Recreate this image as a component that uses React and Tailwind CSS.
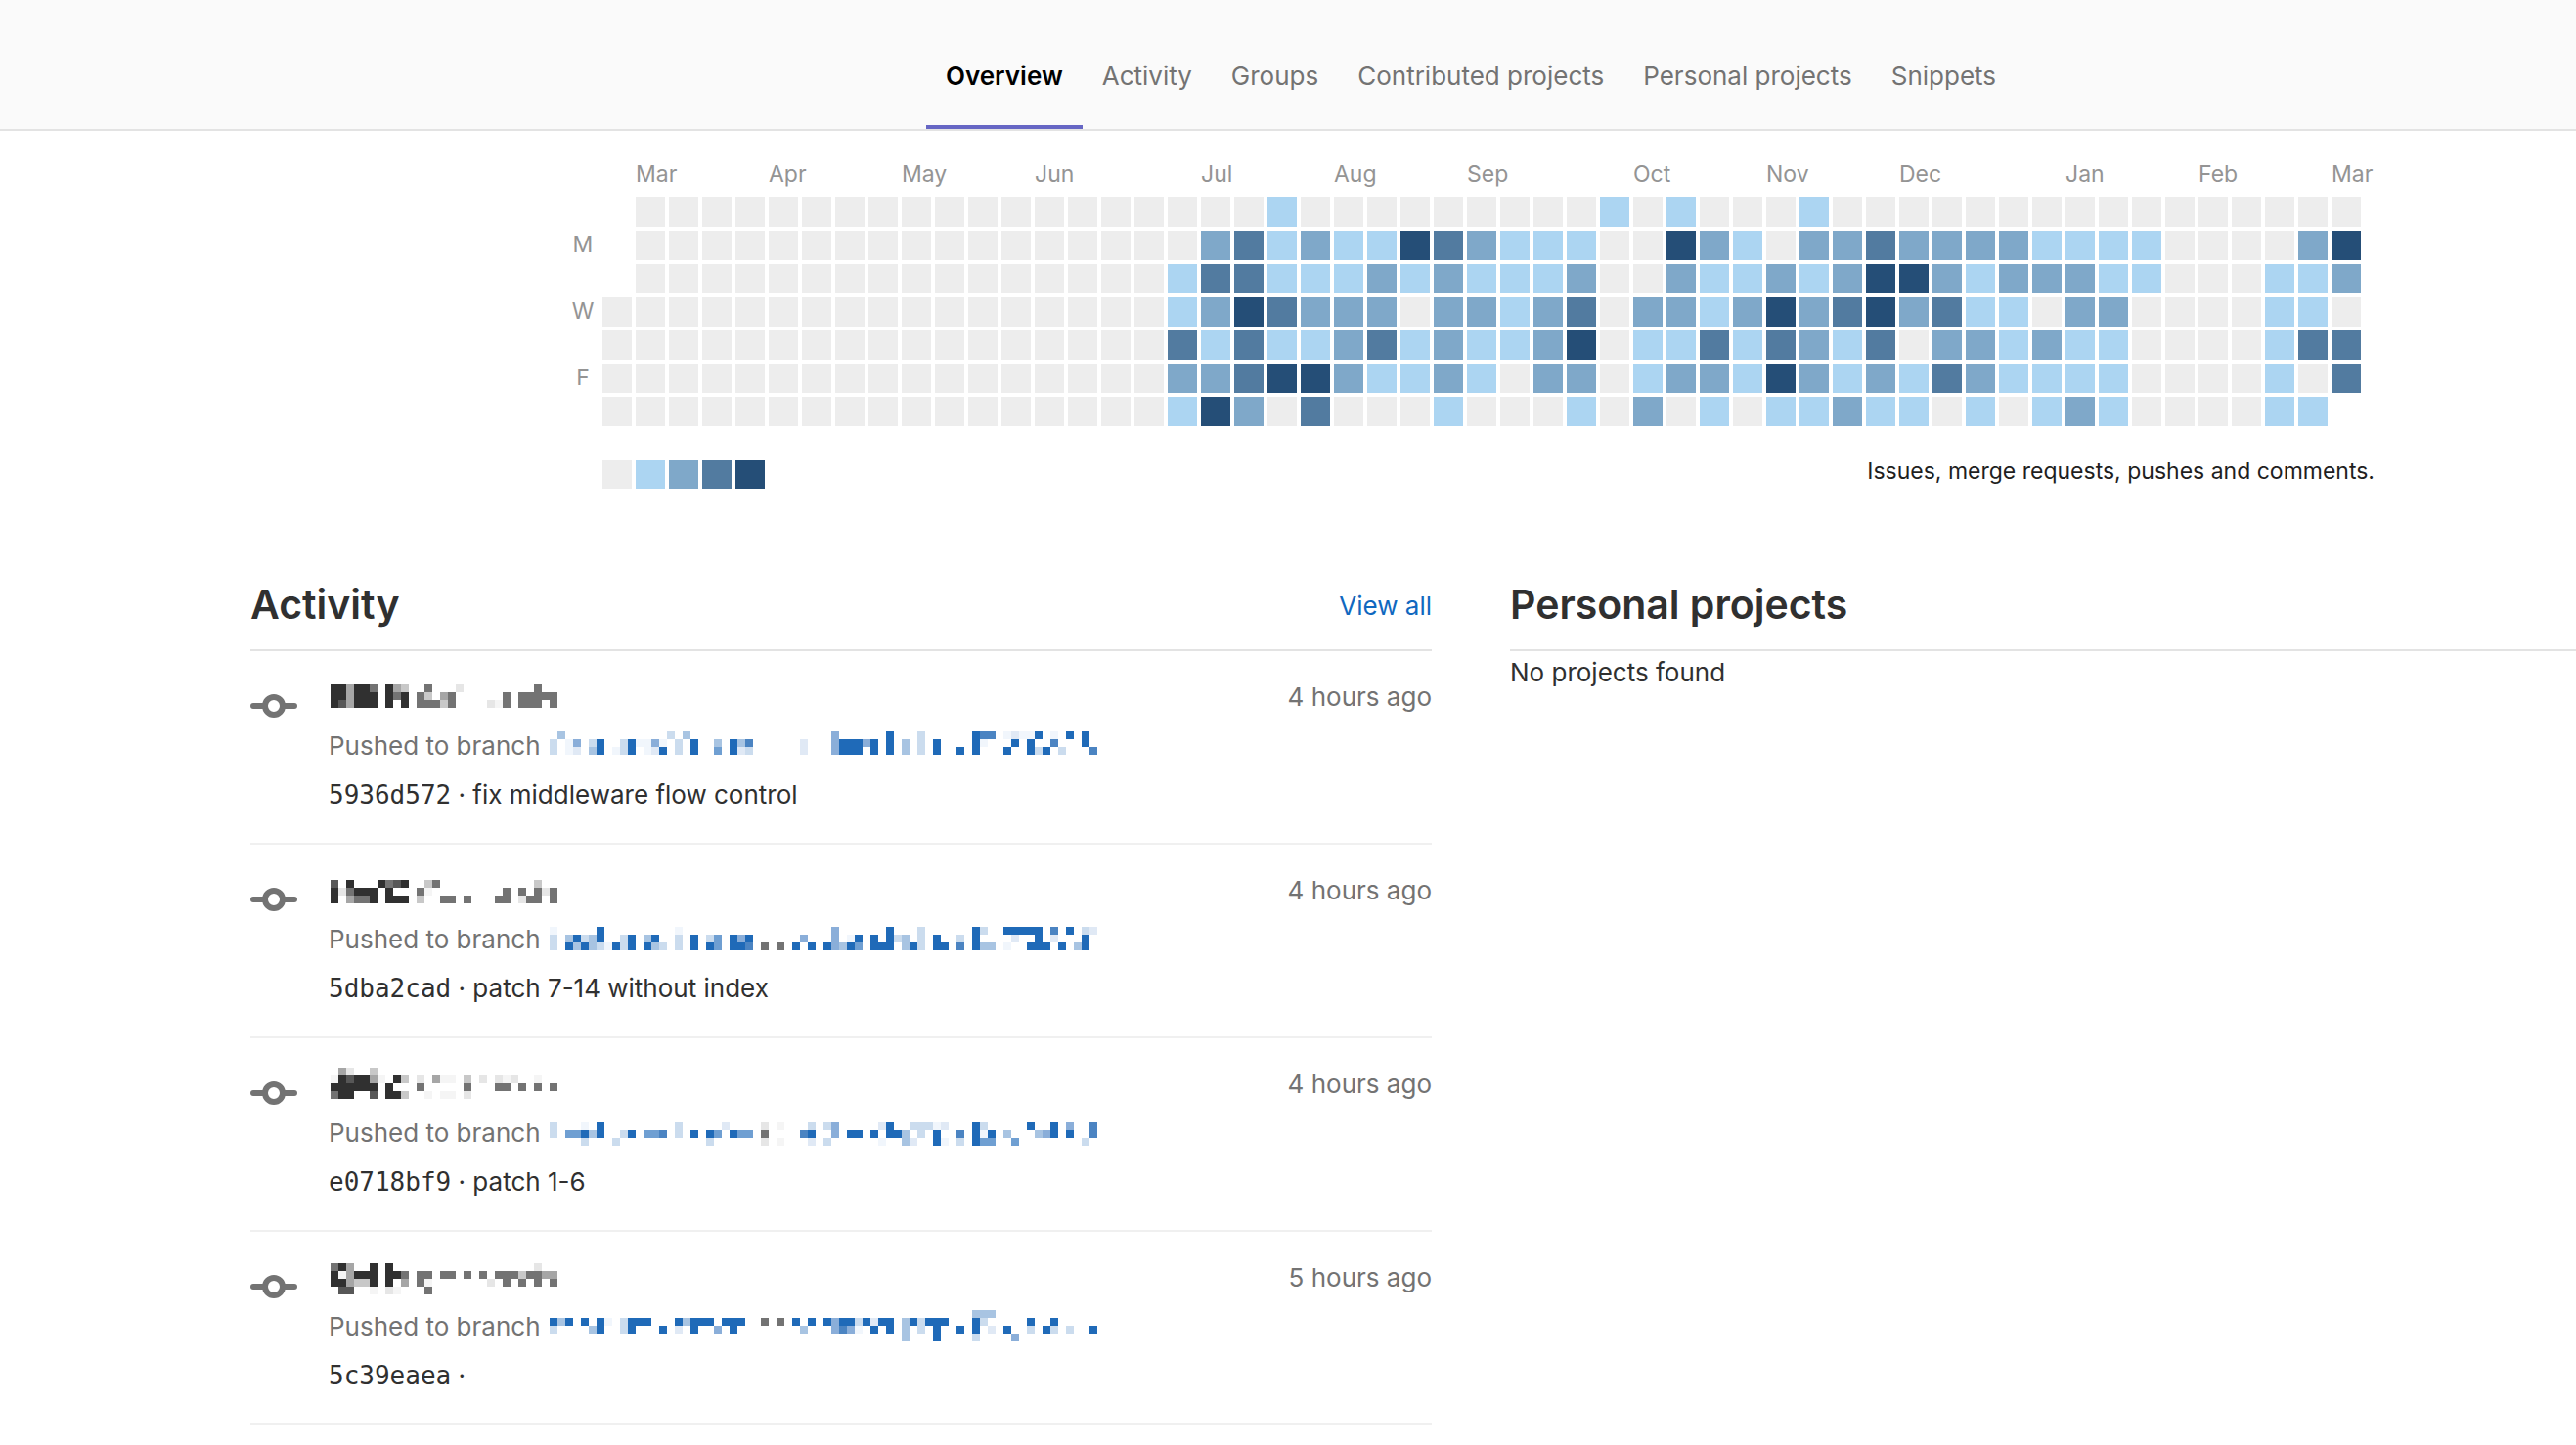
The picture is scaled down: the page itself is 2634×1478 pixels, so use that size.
import React from "react";

const TABS = [
  "Overview",
  "Activity",
  "Groups",
  "Contributed projects",
  "Personal projects",
  "Snippets",
];

const LEVELS = {
  0: "bg-[#ededed]",
  1: "bg-[#acd5f2]",
  2: "bg-[#7fa8c9]",
  3: "bg-[#527ba0]",
  4: "bg-[#254e77]",
};

const QUIET = "0000000000000000";

// One string per weekday, Sunday first; one character per week. "." is a day outside the range.
const DAYS = [
  "." + QUIET + "0001000000000101000" + "10000000000000000",
  "." + QUIET + "0231211432111004210" + "22322221111000024",
  "." + QUIET + "1331112121112002112" + "12442122211000112",
  "0" + QUIET + "1243222022123022124" + "23423110220000110",
  "0" + QUIET + "3131123121124011313" + "21302212110000133",
  "0" + QUIET + "2234421121022012214" + "21213211110000103",
  "0" + QUIET + "142030001000102010" + "112110101210000" + "11.",
];

const MONTHS = {
  1: "Mar",
  5: "Apr",
  9: "May",
  13: "Jun",
  18: "Jul",
  22: "Aug",
  26: "Sep",
  31: "Oct",
  35: "Nov",
  39: "Dec",
  44: "Jan",
  48: "Feb",
  52: "Mar",
};

const WEEKDAYS = ["", "M", "", "W", "", "F", ""];

const SHADES = {
  k: "#303030",
  j: "#575757",
  g: "#737373",
  h: "#a6a6a6",
  l: "#c8c8c8",
  m: "#e6e6e6",
  n: "#f5f5f5",
  B: "#1f6ab8",
  C: "#4b84c2",
  D: "#6f9fd2",
  E: "#8aaed9",
  F: "#a8c4e2",
  G: "#cbdcee",
  H: "#e0e9f5",
  I: "#f1f6fc",
};

const EVENTS = [
  {
    hash: "5936d572",
    message: "fix middleware flow control",
    time: "4 hours ago",
    nameTop: 12,
    name: [
      "0-1k 2h 3-4k 5g 7k 8h 9l 12g 16m 26g",
      "0-1k 2h 3-5k 7k 8g 9k 11g 12l 14h 15g 22g 24-28g",
      "0k 1j 2h 3-5k 7k 9k 11-13g 14l 15g 20m 21n 22g 24-26g 28g",
    ],
    branchTop: 10,
    branch: [
      "1F 15G 17F 36E 43B 47G 54B 55-56C 58I 59H 60-61I 62B 64I 66B 68B",
      "0G 2I 3E 5G 6B 9G 10B 11-12I 13E 14I 16G 18B 21F 23B 24F 25C 32H 36E 37-39B 40E 41B 43B 45F 47G 49B 54B 55I 59B 61B 64C 68B",
      "0G 2I 3H 5F 6B 8I 9G 10B 12I 13H 14B 16G 18B 21D 23B 24H 25G 32H 36E 37-39B 41B 43B 45F 47G 49B 52B 54B 58B 61B 62G 63B 65G 69C",
    ],
  },
  {
    hash: "5dba2cad",
    message: "patch 7-14 without index",
    time: "4 hours ago",
    nameTop: 14,
    name: [
      "0j 2k 6k 7g 8j 9k 12l 13g 26l",
      "0k 1m 2g 3-5k 7k 11g 12n 22g 24g 26g 27m 28g",
      "0k 2h 3-4g 5k 7-9k 11l 14-15g 17g 21-22g 24m 25-26g 28g",
    ],
    branchTop: 12,
    branch: [
      "0I 6B 16I 36E 43B 47G 54B 55G 58-62B 64C 66B 68G 69H",
      "0G 2F 3B 4G 5F 6B 9G 10B 12F 13B 16G 18B 20G 21D 23B 24E 25B 32E 36E 38I 39B 41B 43B 44G 45F 47G 49B 52G 54B 59H 62B 64H 68B",
      "0G 2B 3F 4B 5F 6G 7I 8B 9G 10B 12B 13F 14G 16G 18B 20B 21D 23-24B 25C 27g 29g 31B 33B 35B 36E 37F 38B 39D 41-43B 45F 46B 47G 49-50B 52C 54B 55-56F 58I 61-63B 65B 67F 68B",
    ],
  },
  {
    hash: "e0718bf9",
    message: "patch 1-6",
    time: "4 hours ago",
    nameTop: 8,
    name: [
      "1h 2m 5l",
      "0n 1k 2j 3-4k 5h 6n 8k 9l 11m 13h 14-15n 17l 19m 21m 22n 23m 26n",
      "0-5k 7k 11g 17g 21-22g 24g 26g 28g",
      "0g 1-2k 5j 7-8k 9l 12n 14-15n 17m",
    ],
    branchTop: 14,
    branch: [
      "0G 4I 6B 16G 22H 27m 29n 33G 35G 36E 42H 43B 46-48G 49I 50H 54B 55G 61B 64B 66E 69C",
      "0G 2-3D 4B 5F 6B 9G 10B 12-13D 14C 16G 18B 20B 21D 23B 24-25D 27g 32C 33B 36E 38-39B 41B 43-44B 45F 47G 49B 52C 54B 55I 56B 58F 62F 63E 64B 66B 69C",
      "4G 8G 20G 27m 29n 33H 35G 42I 45F 46H 49B 50I 52G 54B 55-56D 59D 68G",
    ],
  },
  {
    hash: "5c39eaea",
    message: "",
    time: "5 hours ago",
    nameTop: 10,
    name: [
      "0g 1k 2h 5k 7k 26m",
      "0k 1n 2h 3-5k 7-8k 9g 11-12g 14-15g 17g 19g 21-23g 24l 25-26g 27-28h",
      "0-1k 2h 3-4l 5k 7k 9h 11g 12n 20m 22g 24g 26g 28g",
      "1-2j 5n 7m 8n 12g",
    ],
    branchTop: 8,
    branch: [
      "54-56F",
      "0B 1F 2B 4B 6B 7I 9G 10-12B 16B 17F 18-20B 22-24B 27g 29g 31B 33B 35B 36E 37-38B 39G 40B 41H 42-43B 45F 46B 47G 48-50B 54B 55G 61B 64B",
      "0G 5F 6B 9G 10B 14B 16H 18B 21E 23B 32F 36E 37C 38E 39I 41B 43B 45F 47G 49B 52B 54B 56H 58B 61G 63B 64G 66G 69B",
      "45F 49B 54G 59E",
    ],
  },
];

function Mosaic({ rows, top, columns }) {
  const width = columns * 8;
  return (
    <svg
      aria-hidden="true"
      width={width}
      height="50"
      viewBox={`0 0 ${width} 50`}
      shapeRendering="crispEdges"
      className="block shrink-0"
    >
      {rows.flatMap((row, r) =>
        row.split(" ").map((token) => {
          const [, from, to, shade] = token.match(/^(\d+)(?:-(\d+))?(\w)$/);
          const count = Number(to ?? from) - Number(from) + 1;
          return (
            <rect
              key={`${r}-${token}`}
              x={Number(from) * 8}
              y={top + r * 8}
              width={count * 8}
              height="8"
              fill={SHADES[shade]}
            />
          );
        })
      )}
    </svg>
  );
}

function CommitIcon() {
  return (
    <svg
      aria-hidden="true"
      width="48"
      height="48"
      viewBox="0 0 48 48"
      fill="none"
      stroke="#737373"
      strokeWidth="6"
      strokeLinecap="round"
      className="block shrink-0"
    >
      <circle cx="24" cy="24" r="9" />
      <path d="M3 24h11M34 24h11" />
    </svg>
  );
}

function Calendar() {
  const weeks = Array.from({ length: DAYS[0].length }, (_, w) => w);
  return (
    <section aria-label="Contribution calendar" className="mx-auto w-fit pt-6 pr-3.5">
      <div className="flex gap-1 text-[23px] text-[#949494]">
        <div className="flex w-8 flex-col gap-1 pt-11 text-center">
          {WEEKDAYS.map((day, i) => (
            <div key={i} className="h-[30px] leading-[28px]">
              {day}
            </div>
          ))}
        </div>
        {weeks.map((w) => (
          <div key={w} className="flex w-[30px] flex-col gap-1">
            <div className="h-10 leading-[40px] whitespace-nowrap">{MONTHS[w]}</div>
            {DAYS.map((row, d) => (
              <div key={d} className={`h-[30px] ${LEVELS[row[w]] ?? ""}`} />
            ))}
          </div>
        ))}
      </div>
      <div className="-mr-3.5 flex items-start justify-between pt-[34px] pl-9">
        <div className="flex gap-1">
          {[0, 1, 2, 3, 4].map((level) => (
            <div key={level} className={`size-[30px] ${LEVELS[level]}`} />
          ))}
        </div>
        <p className="text-[23px] leading-[24px] text-[#1f1f1f]">
          Issues, merge requests, pushes and comments.
        </p>
      </div>
    </section>
  );
}

function Event({ event }) {
  return (
    <li className="flex border-b-2 border-[#f0f0f0] pt-[22px] pb-6">
      <div className="w-20 shrink-0 pt-2.5">
        <CommitIcon />
      </div>
      <div className="min-w-0 grow leading-[50px]">
        <div className="flex justify-between">
          <div className="pl-0.5">
            <Mosaic rows={event.name} top={event.nameTop} columns={29} />
          </div>
          <time className="text-[#737373]">{event.time}</time>
        </div>
        <div className="flex">
          <span className="w-[226px] shrink-0 whitespace-nowrap text-[#737373]">
            Pushed to branch
          </span>
          <Mosaic rows={event.branch} top={event.branchTop} columns={70} />
        </div>
        <p className="h-[50px] whitespace-nowrap text-[#303030]">
          <a
            href="#commit"
            className="font-['DejaVu_Sans_Mono',monospace]"
          >
            {event.hash}
          </a>{" "}
          · {event.message}
        </p>
      </div>
    </li>
  );
}

export default function App() {
  return (
    <div className="min-h-screen overflow-x-hidden bg-white font-['Inter',sans-serif] text-[26px] text-[#303030]">
      <header className="border-b-2 border-[#e3e3e3] bg-[#fafafa]">
        <nav aria-label="Profile" className="-mr-[118px] flex justify-center pl-64">
          {TABS.map((tab, i) => (
            <a
              key={tab}
              href={`#${tab.toLowerCase().replace(" ", "-")}`}
              aria-current={i === 0 ? "page" : undefined}
              className={
                i === 0
                  ? "border-b-4 border-[#6666c4] px-5 pt-14 pb-7 leading-[44px] whitespace-nowrap font-semibold text-black"
                  : "border-b-4 border-transparent px-5 pt-14 pb-7 leading-[44px] whitespace-nowrap text-[#737373]"
              }
            >
              {tab}
            </a>
          ))}
        </nav>
      </header>
      <main className="-mr-[118px] pl-64">
        <Calendar />
        <div className="grid grid-cols-2 gap-20 pt-[74px]">
          <section>
            <div className="flex h-[92px] items-center justify-between border-b-2 border-[#e3e3e3]">
              <h2 className="text-[41px] font-semibold">Activity</h2>
              <a href="#activity" className="text-[#1068bf]">
                View all
              </a>
            </div>
            <ul>
              {EVENTS.map((event) => (
                <Event key={event.hash} event={event} />
              ))}
            </ul>
          </section>
          <section>
            <div className="flex h-[92px] items-center border-b-2 border-[#e3e3e3]">
              <h2 className="text-[41px] font-semibold">Personal projects</h2>
            </div>
            <p className="leading-[44px]">No projects found</p>
          </section>
        </div>
      </main>
    </div>
  );
}
